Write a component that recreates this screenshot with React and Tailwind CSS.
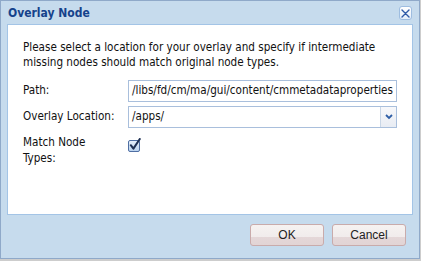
import React from 'react';

const CloseButton = () => (
  <button className="w-[13px] h-[14px] mt-[1px] flex items-center justify-center rounded-[3px] border border-[#9ebde0] bg-[linear-gradient(#ffffff,#e4eefa)]">
    <svg width="9" height="9" viewBox="0 0 9 9">
      <path d="M1 1 L8 8 M8 1 L1 8" stroke="#2f5aa8" strokeWidth="1.4" strokeLinecap="round" />
    </svg>
  </button>
);

const CheckIcon = () => (
  <svg width="14" height="15" viewBox="0 0 14 15">
    <defs>
      <linearGradient id="cbg" x1="0" y1="0" x2="0" y2="1">
        <stop offset="0" stopColor="#e6f0fb" />
        <stop offset="1" stopColor="#b9d2ee" />
      </linearGradient>
    </defs>
    <rect x="0.5" y="2.5" width="11" height="11" rx="1.5" fill="url(#cbg)" stroke="#4f6fa3" />
    <path d="M2.8 7.2 L5.4 10.6 L11.8 1" stroke="#1d2f52" strokeWidth="2" fill="none" strokeLinecap="round" strokeLinejoin="round" />
  </svg>
);

const Button = ({ children }) => (
  <button className="w-[74px] h-[22px] rounded-[3px] border border-[#c9abab] bg-[linear-gradient(#f6f2f1_0%,#f1ecec_58%,#e4d7d8_58%,#e2d4d5_100%)] text-[12px] text-[#222] font-['Liberation_Sans',sans-serif] leading-none">
    {children}
  </button>
);

const App = () => {
  return (
    <div className="w-[421px] h-[261px] bg-[#cdcdcd] font-['DejaVu_Sans_Condensed','DejaVu_Sans',sans-serif]">
      <div className="w-[420px] h-[259px] border border-[#8fa9c9] bg-[#c6dbed] flex flex-col px-[6px]">
        {/* Header */}
        <div className="h-[23px] flex items-center justify-between pl-[1px] pr-[1px]">
          <span className="text-[12px] font-bold text-[#15428b]">Overlay Node</span>
          <CloseButton />
        </div>

        {/* Body */}
        <div className="h-[191px] bg-white border border-[#a3c4e6] px-[15px] pt-[15px] text-[11.6px] text-[#111]">
          <p className="leading-[15px]">
            Please select a location for your overlay and specify if intermediate missing nodes should match original node types.
          </p>

          <div className="mt-[10px] flex items-center">
            <label className="w-[105px] shrink-0">Path:</label>
            <div className="flex-1 min-w-0 h-[22px] border border-[#a9bfdc] bg-white flex items-center pl-[3px] overflow-hidden whitespace-nowrap">
              /libs/fd/cm/ma/gui/content/cmmetadataproperties
            </div>
          </div>

          <div className="mt-[4px] flex items-center">
            <label className="w-[105px] shrink-0">Overlay Location:</label>
            <div className="flex-1 h-[22px] border border-[#a9bfdc] bg-white flex items-center">
              <span className="flex-1 px-[3px]">/apps/</span>
              <div className="w-[16px] h-full border-l border-[#c9d6e6] bg-[linear-gradient(#f7f8fb,#e8ecf3)] flex items-center justify-center">
                <svg width="8" height="6" viewBox="0 0 8 6">
                  <path d="M1 1 L4 4 L7 1" stroke="#2e5ea6" strokeWidth="1.8" fill="none" />
                </svg>
              </div>
            </div>
          </div>

          <div className="mt-[6px] flex items-start">
            <label className="w-[85px] mr-[20px] shrink-0 leading-[16px]">Match Node Types:</label>
            <div className="mt-[4px]">
              <CheckIcon />
            </div>
          </div>
        </div>

        {/* Footer */}
        <div className="flex justify-end gap-[8px] pt-[9px] pr-[7px]">
          <Button>OK</Button>
          <Button>Cancel</Button>
        </div>
      </div>
    </div>
  );
};

export default App;
